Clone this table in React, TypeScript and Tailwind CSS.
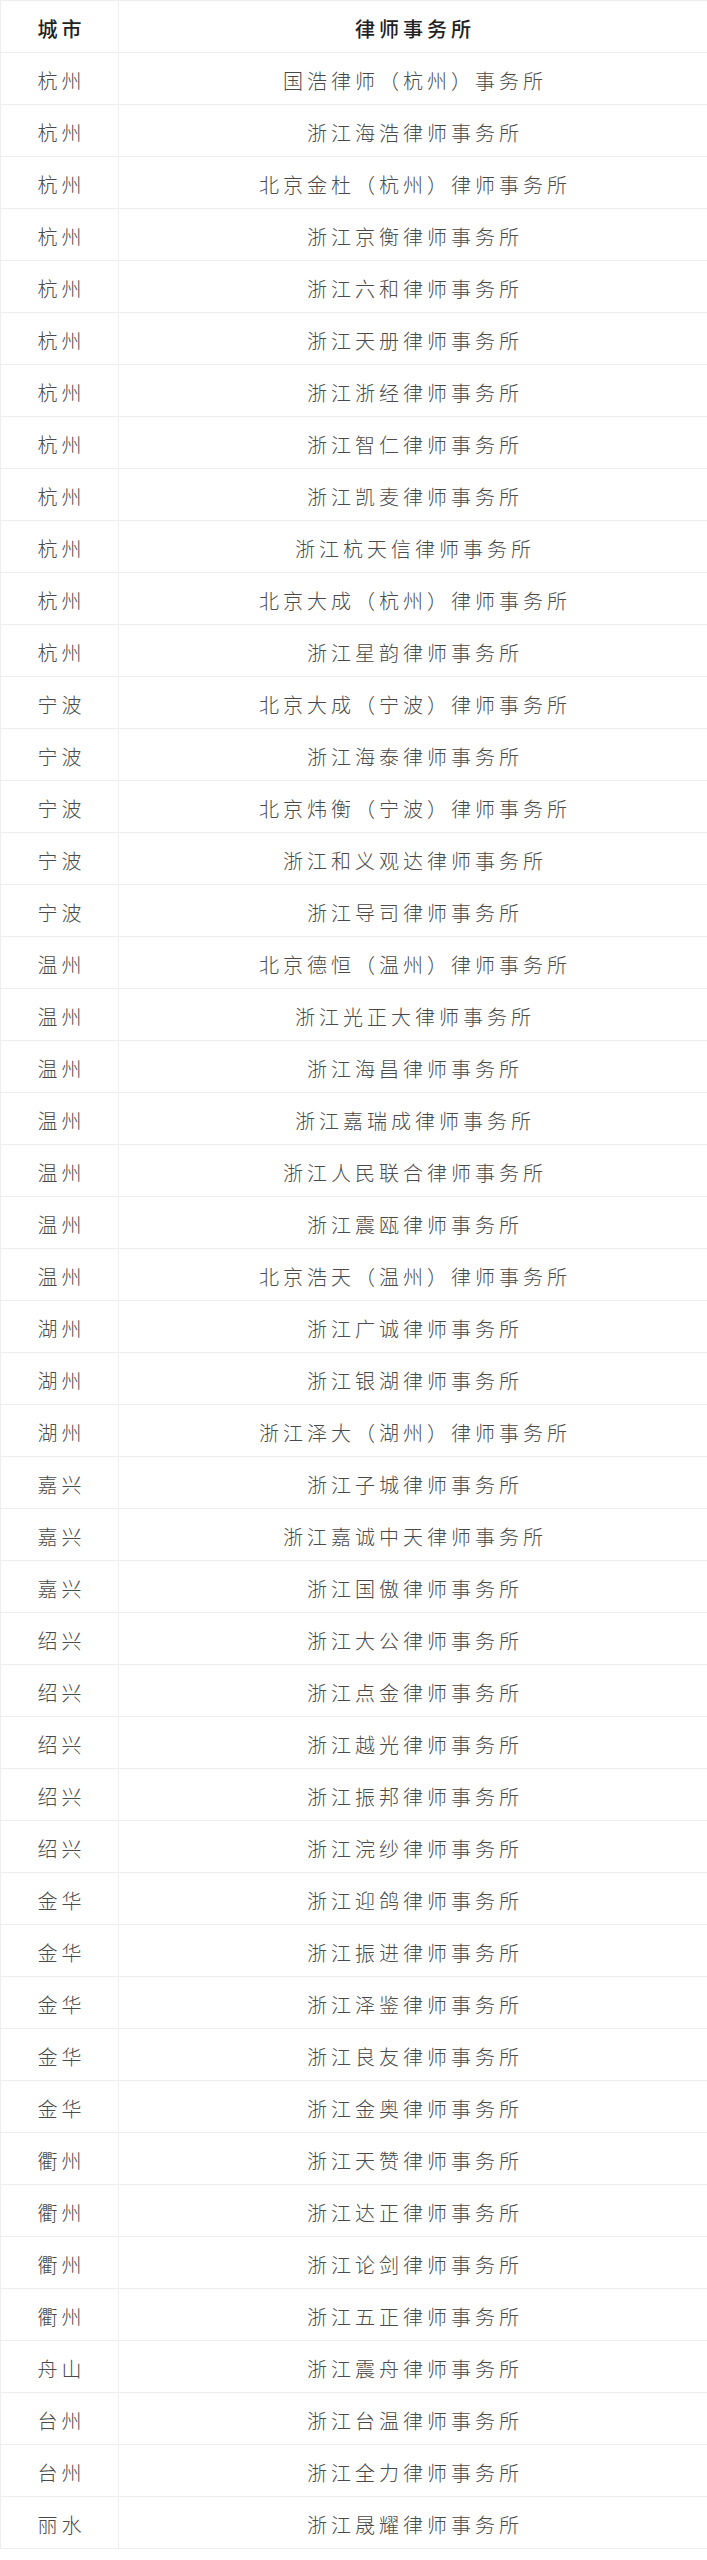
import React from "react";

const rows: [string, string][] = [
  ["杭州", "国浩律师（杭州）事务所"],
  ["杭州", "浙江海浩律师事务所"],
  ["杭州", "北京金杜（杭州）律师事务所"],
  ["杭州", "浙江京衡律师事务所"],
  ["杭州", "浙江六和律师事务所"],
  ["杭州", "浙江天册律师事务所"],
  ["杭州", "浙江浙经律师事务所"],
  ["杭州", "浙江智仁律师事务所"],
  ["杭州", "浙江凯麦律师事务所"],
  ["杭州", "浙江杭天信律师事务所"],
  ["杭州", "北京大成（杭州）律师事务所"],
  ["杭州", "浙江星韵律师事务所"],
  ["宁波", "北京大成（宁波）律师事务所"],
  ["宁波", "浙江海泰律师事务所"],
  ["宁波", "北京炜衡（宁波）律师事务所"],
  ["宁波", "浙江和义观达律师事务所"],
  ["宁波", "浙江导司律师事务所"],
  ["温州", "北京德恒（温州）律师事务所"],
  ["温州", "浙江光正大律师事务所"],
  ["温州", "浙江海昌律师事务所"],
  ["温州", "浙江嘉瑞成律师事务所"],
  ["温州", "浙江人民联合律师事务所"],
  ["温州", "浙江震瓯律师事务所"],
  ["温州", "北京浩天（温州）律师事务所"],
  ["湖州", "浙江广诚律师事务所"],
  ["湖州", "浙江银湖律师事务所"],
  ["湖州", "浙江泽大（湖州）律师事务所"],
  ["嘉兴", "浙江子城律师事务所"],
  ["嘉兴", "浙江嘉诚中天律师事务所"],
  ["嘉兴", "浙江国傲律师事务所"],
  ["绍兴", "浙江大公律师事务所"],
  ["绍兴", "浙江点金律师事务所"],
  ["绍兴", "浙江越光律师事务所"],
  ["绍兴", "浙江振邦律师事务所"],
  ["绍兴", "浙江浣纱律师事务所"],
  ["金华", "浙江迎鸽律师事务所"],
  ["金华", "浙江振进律师事务所"],
  ["金华", "浙江泽鉴律师事务所"],
  ["金华", "浙江良友律师事务所"],
  ["金华", "浙江金奥律师事务所"],
  ["衢州", "浙江天赞律师事务所"],
  ["衢州", "浙江达正律师事务所"],
  ["衢州", "浙江论剑律师事务所"],
  ["衢州", "浙江五正律师事务所"],
  ["舟山", "浙江震舟律师事务所"],
  ["台州", "浙江台温律师事务所"],
  ["台州", "浙江全力律师事务所"],
  ["丽水", "浙江晟耀律师事务所"],
];

export default function App() {
  return (
    <div
      className="w-[707px] bg-white"
      style={{ fontFamily: '"Noto Sans CJK SC", "Noto Sans", sans-serif' }}
    >
      <div className="border-t border-l border-[#eeeeee]">
        <div className="flex h-[52px] border-b border-[#eeeeee] text-[20px] tracking-[4px] text-[#222222] font-medium">
          <div className="w-[118px] shrink-0 border-r border-[#eeeeee] flex items-center justify-center pt-[4px] pl-[4px]">
            城市
          </div>
          <div className="flex-1 flex items-center justify-center pt-[4px] pl-[4px]">
            律师事务所
          </div>
        </div>
        {rows.map(([city, firm], i) => (
          <div
            key={i}
            className="flex h-[52px] border-b border-[#eeeeee] text-[20px] tracking-[4px] text-[#4a4a4a] font-light"
          >
            <div className="w-[118px] shrink-0 border-r border-[#eeeeee] flex items-center justify-center pt-[4px] pl-[4px]">
              {city}
            </div>
            <div className="flex-1 flex items-center justify-center pt-[4px] pl-[4px]">
              {firm}
            </div>
          </div>
        ))}
      </div>
    </div>
  );
}
